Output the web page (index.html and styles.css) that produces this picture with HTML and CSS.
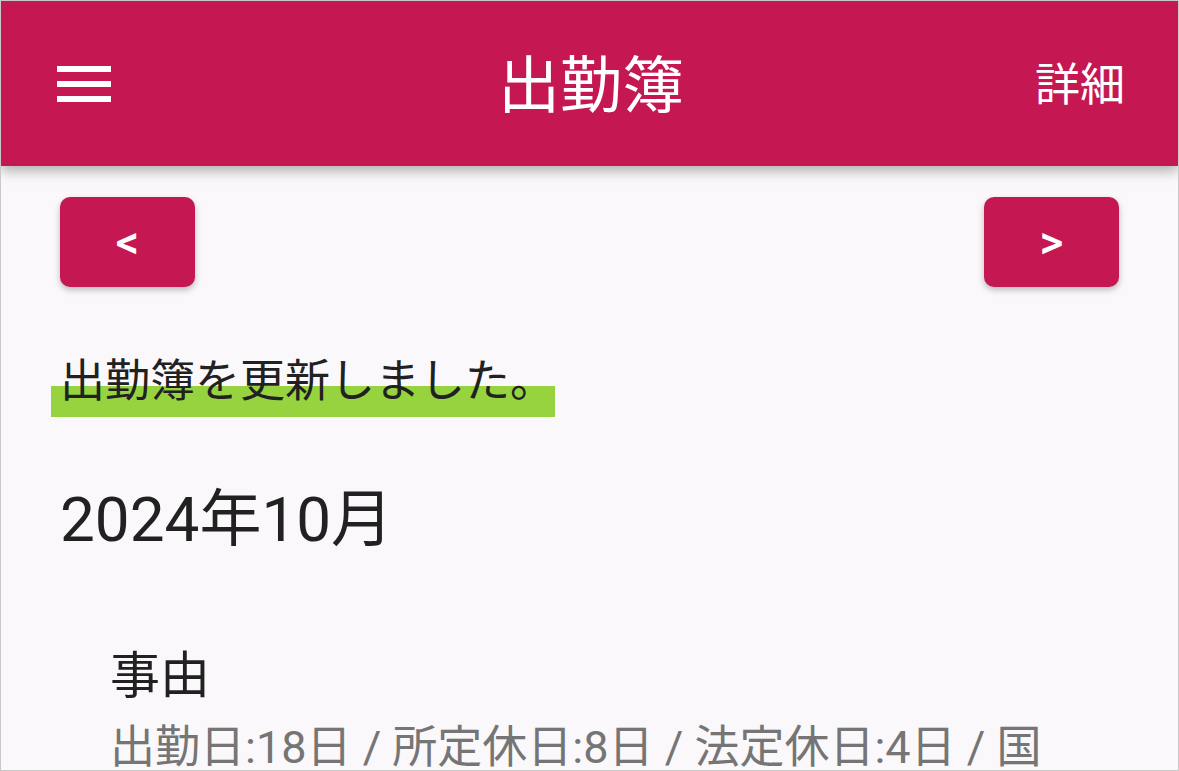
FILE: index.html
```html
<!DOCTYPE html>
<html lang="ja">
<head>
<meta charset="utf-8">
<title>出勤簿</title>
<link rel="stylesheet" href="styles.css">
</head>
<body>
<div class="frame">
  <header class="appbar">
    <button class="menu" aria-label="メニュー">
      <svg width="54" height="36" viewBox="0 0 54 36">
        <rect x="0" y="0" width="54" height="6" fill="#fff"/>
        <rect x="0" y="15" width="54" height="6" fill="#fff"/>
        <rect x="0" y="30" width="54" height="6" fill="#fff"/>
      </svg>
    </button>
    <h1 class="title">出勤簿</h1>
    <span class="detail">詳細</span>
  </header>
  <main class="content">
    <div class="nav">
      <button class="navbtn">&lt;</button>
      <button class="navbtn">&gt;</button>
    </div>
    <p class="message">出勤簿を更新しました。</p>
    <h2 class="month">2024年10月</h2>
    <section class="reason">
      <h3 class="reason-title">事由</h3>
      <p class="reason-summary">出勤日:18日 / 所定休日:8日 / 法定休日:4日 / 国民の祝日:1日</p>
    </section>
  </main>
</div>
</body>
</html>
```
FILE: styles.css
```css
* { box-sizing: border-box; }
html, body { margin: 0; padding: 0; }
body {
  font-family: Roboto, "Noto Sans CJK JP", sans-serif;
  background: #fff;
}
.frame {
  width: 1179px;
  height: 771px;
  border: 1px solid #c9c9c9;
  background: #faf8fa;
  overflow: hidden;
}
.appbar {
  position: relative;
  height: 165px;
  background: #c51852;
  color: #fff;
  display: grid;
  grid-template-columns: 1fr auto 1fr;
  align-items: center;
  padding: 0 53px 0 56px;
  box-shadow: 0 5px 12px rgba(0,0,0,0.3);
}
.menu {
  justify-self: start;
  background: none;
  border: 0;
  padding: 0;
  display: flex;
  cursor: pointer;
}
.title {
  margin: 0;
  font-size: 62px;
  font-weight: 400;
  line-height: 1;
  padding-top: 6px;
}
.detail {
  justify-self: end;
  font-size: 45px;
  line-height: 1;
  padding-top: 4px;
}
.content {
  padding: 31px 59px 0 59px;
}
.nav {
  display: flex;
  justify-content: space-between;
}
.navbtn {
  width: 135px;
  height: 90px;
  border: 0;
  border-radius: 10px;
  background: #c51852;
  color: #fff;
  font-family: Roboto, sans-serif;
  font-size: 46px;
  font-weight: 500;
  box-shadow: 0 3px 6px rgba(0,0,0,0.25);
  padding: 0;
}
.message {
  margin: 60px 0 0 -9px;
  width: 504px;
  padding-left: 9px;
  font-size: 45px;
  line-height: 70px;
  color: #212121;
  background: linear-gradient(to bottom, transparent 39px, #96d33f 39px);
}
.month {
  margin: 63px 0 0 0;
  font-size: 62px;
  font-weight: 400;
  line-height: 80px;
  color: #212121;
}
.reason {
  padding: 0 50px;
  margin-top: 84px;
}
.reason-title {
  margin: 0;
  font-size: 50px;
  font-weight: 400;
  line-height: 64px;
  color: #212121;
}
.reason-summary {
  margin: 10px 0 0 0;
  font-size: 45px;
  line-height: 60px;
  color: #757575;
}
```
